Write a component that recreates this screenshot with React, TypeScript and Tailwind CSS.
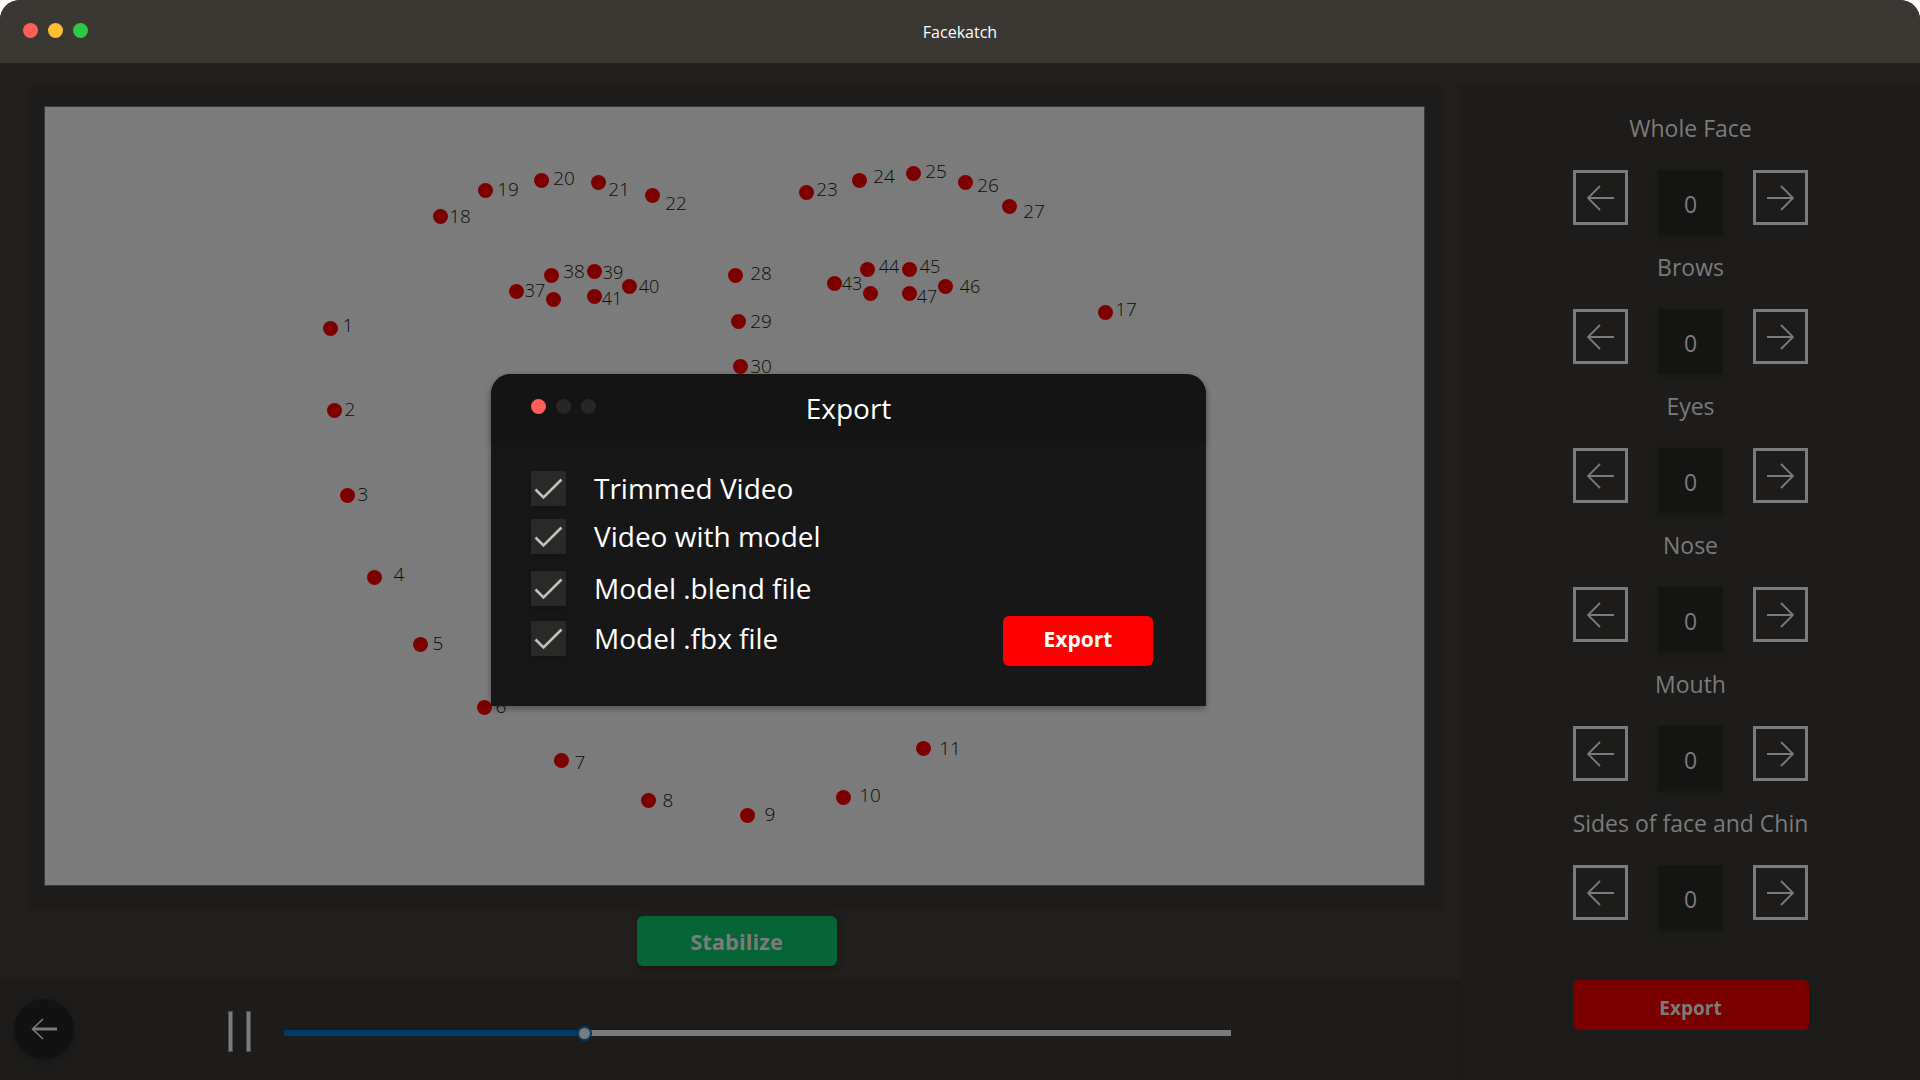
import { useState } from "react";

type Point = { n: string; x: number; y: number; lx?: number; ly?: number; small?: boolean };

const points: Point[] = [
  { n: "1", x: 330, y: 328, lx: 348, ly: 325 },
  { n: "2", x: 334, y: 410, lx: 350, ly: 409 },
  { n: "3", x: 347, y: 495, lx: 363, ly: 494 },
  { n: "4", x: 374, y: 577, lx: 399, ly: 574 },
  { n: "5", x: 420, y: 644, lx: 438, ly: 643 },
  { n: "6", x: 484, y: 707, lx: 501, ly: 706 },
  { n: "7", x: 561, y: 760, lx: 580, ly: 762 },
  { n: "8", x: 648, y: 800, lx: 668, ly: 800 },
  { n: "9", x: 747, y: 815, lx: 770, ly: 814 },
  { n: "10", x: 843, y: 797, lx: 870, ly: 795 },
  { n: "11", x: 923, y: 748, lx: 950, ly: 748 },
  { n: "17", x: 1105, y: 312, lx: 1126, ly: 309 },
  { n: "18", x: 440, y: 216, lx: 460, ly: 216 },
  { n: "19", x: 485, y: 190, lx: 508, ly: 189 },
  { n: "20", x: 541, y: 180, lx: 564, ly: 178 },
  { n: "21", x: 598, y: 182, lx: 619, ly: 189 },
  { n: "22", x: 652, y: 195, lx: 676, ly: 203 },
  { n: "23", x: 806, y: 192, lx: 827, ly: 189 },
  { n: "24", x: 859, y: 180, lx: 884, ly: 176 },
  { n: "25", x: 913, y: 173, lx: 936, ly: 171 },
  { n: "26", x: 965, y: 182, lx: 988, ly: 185 },
  { n: "27", x: 1009, y: 206, lx: 1034, ly: 211 },
  { n: "28", x: 735, y: 275, lx: 761, ly: 273 },
  { n: "29", x: 738, y: 321, lx: 761, ly: 321 },
  { n: "30", x: 740, y: 366, lx: 761, ly: 366 },
  { n: "37", x: 516, y: 291, lx: 535, ly: 290, small: true },
  { n: "38", x: 551, y: 275, lx: 574, ly: 271 },
  { n: "39", x: 594, y: 271, lx: 613, ly: 272, small: true },
  { n: "40", x: 629, y: 286, lx: 649, ly: 286, small: true },
  { n: "41", x: 594, y: 296, lx: 612, ly: 298, small: true },
  { n: "42", x: 553, y: 299 },
  { n: "43", x: 834, y: 283, lx: 852, ly: 283, small: true },
  { n: "44", x: 867, y: 269, lx: 889, ly: 266, small: true },
  { n: "45", x: 909, y: 269, lx: 930, ly: 266, small: true },
  { n: "46", x: 945, y: 286, lx: 970, ly: 286, small: true },
  { n: "47", x: 909, y: 293, lx: 927, ly: 296, small: true },
  { n: "48", x: 870, y: 293 },
];

// Landmark coordinates are in window space; the canvas starts here.
const ORIGIN = { x: 45, y: 107 };

const groups = ["Whole Face", "Brows", "Eyes", "Nose", "Mouth", "Sides of face and Chin"];

const exportsList = [
  { label: "Trimmed Video", gap: "" },
  { label: "Video with model", gap: "mt-[13px]" },
  { label: "Model .blend file", gap: "mt-[17px]" },
  { label: "Model .fbx file", gap: "mt-[15px]" },
];

function Arrow({ flip = false }: { flip?: boolean }) {
  return (
    <svg
      width="27"
      height="26"
      viewBox="0 0 27 26"
      fill="none"
      stroke="currentColor"
      strokeWidth="1.8"
      className={flip ? "rotate-180" : ""}
      aria-hidden="true"
    >
      <path d="M27 13H1M13 1L1 13l12 12" />
    </svg>
  );
}

function Stepper({ label }: { label: string }) {
  const [value, setValue] = useState(0);
  const box =
    "flex size-[55px] items-center justify-center border-[3px] border-[#7b7b7b] text-[#7b7b7b]";
  return (
    <div role="group" aria-label={label} className="flex h-[139px] w-[235px] flex-col">
      <h2 className="flex h-[59px] items-start justify-center whitespace-nowrap text-[23px] leading-[34px]">
        {label}
      </h2>
      <div className="flex items-start justify-between">
        <button type="button" aria-label={`Previous ${label}`} className={box} onClick={() => setValue(value - 1)}>
          <Arrow />
        </button>
        <output className="flex size-[65px] items-center justify-center bg-[#141412] pt-1 text-[23px] shadow-[0_3px_6px_rgba(0,0,0,0.16)]">
          {value}
        </output>
        <button type="button" aria-label={`Next ${label}`} className={box} onClick={() => setValue(value + 1)}>
          <Arrow flip />
        </button>
      </div>
    </div>
  );
}

function FaceCanvas() {
  return (
    <div className="relative min-h-0 flex-1 border border-[#383838] bg-[#7b7b7b]">
      {points.map((p) => (
        <div key={p.n}>
          <span
            className="absolute -mt-[7px] -ml-[7px] size-[15px] rounded-full bg-[#7d0000]"
            style={{ left: p.x - ORIGIN.x, top: p.y - ORIGIN.y }}
          />
          {p.lx !== undefined && p.ly !== undefined && (
            <span
              className={`absolute flex h-6 w-8 -translate-1/2 items-center justify-center font-light text-[#0c0c0c] ${
                p.small ? "text-[18px]" : "text-[19px]"
              }`}
              style={{ left: p.lx - ORIGIN.x, top: p.ly - ORIGIN.y }}
            >
              {p.n}
            </span>
          )}
        </div>
      ))}
    </div>
  );
}

function ExportDialog() {
  return (
    <section
      role="dialog"
      aria-label="Export"
      className="absolute top-[374px] left-[491px] w-[715px] rounded-t-[20px] bg-[#171717] pb-[50px] text-white shadow-[0_3px_6px_rgba(0,0,0,0.3)]"
    >
      <header className="grid h-[68px] grid-cols-[1fr_auto_1fr] items-center rounded-t-[20px] bg-[#141414] px-10 shadow-[0_3px_6px_rgba(0,0,0,0.16)]">
        <div className="flex gap-[10px] pb-1">
          <button type="button" aria-label="Close" className="size-[15px] rounded-full bg-[#ff5f58]" />
          <span className="size-[15px] rounded-full bg-[#272727]" />
          <span className="size-[15px] rounded-full bg-[#272727]" />
        </div>
        <h2 className="text-[28px]">Export</h2>
      </header>
      <form className="flex items-end justify-between pt-[29px] pr-[53px] pl-10" onSubmit={(e) => e.preventDefault()}>
        <div className="flex flex-col">
          {exportsList.map((item) => (
            <label key={item.label} className={`flex h-[35px] items-center gap-7 text-[28px] ${item.gap}`}>
              <span className="grid size-[35px] place-items-center">
                <input
                  type="checkbox"
                  defaultChecked
                  className="peer col-start-1 row-start-1 size-[35px] appearance-none bg-[#2a2927] shadow-[0_3px_6px_rgba(0,0,0,0.16)]"
                />
                <svg
                  viewBox="0 0 35 35"
                  className="pointer-events-none invisible col-start-1 row-start-1 size-[35px] peer-checked:visible"
                  fill="none"
                  stroke="#c0c0bf"
                  strokeWidth="2.6"
                  aria-hidden="true"
                >
                  <path d="M4.500 18.500L12.500 26.500L30.500 8.500" />
                </svg>
              </span>
              <span className="pb-[2px]">{item.label}</span>
            </label>
          ))}
        </div>
        <button
          type="submit"
          className="-mb-[10px] flex h-[50px] w-[150px] items-center justify-center rounded-md bg-[#ff0000] pb-[2px] text-[21px] font-bold"
        >
          Export
        </button>
      </form>
    </section>
  );
}

export default function App() {
  return (
    <div className="bg-white font-['Open_Sans','Noto_Sans',sans-serif]">
      <div className="relative flex min-h-screen flex-col overflow-hidden rounded-t-[20px] bg-[#21201e] text-[#7b7b7b]">
        <header className="grid h-[63px] grid-cols-[1fr_auto_1fr] items-center bg-[#3b3834] px-[23px]">
          <div className="flex gap-[10px] pb-[2px]">
            <button type="button" aria-label="Close window" className="size-[15px] rounded-full bg-[#ff5f58]" />
            <button type="button" aria-label="Minimize window" className="size-[15px] rounded-full bg-[#ffbe2f]" />
            <button type="button" aria-label="Zoom window" className="size-[15px] rounded-full bg-[#2aca42]" />
          </div>
          <h1 className="text-[16px] text-white">Facekatch</h1>
        </header>

        <div className="flex flex-1 pt-[23px]">
          <main className="flex min-w-0 flex-1 flex-col">
            <div className="mr-[19px] ml-[31px] flex flex-1 flex-col bg-[#1d1c1a] pt-5 pr-[17px] pb-[21px] pl-[13px] shadow-[0_3px_6px_rgba(0,0,0,0.12)]">
              <FaceCanvas />
            </div>
            <div className="mr-[19px] ml-[31px] flex h-[72px] justify-center pt-[9px]">
              <button
                type="button"
                className="h-[50px] w-[200px] rounded-md bg-[#066534] text-[22px] font-bold shadow-[0_3px_6px_rgba(30,10,10,0.5)]"
              >
                Stabilize
              </button>
            </div>
            <footer className="flex h-[101px] items-start bg-[#1d1c1a] pt-5 pr-[230px] pl-[14px]">
              <button
                type="button"
                aria-label="Back"
                className="flex size-[60px] items-center justify-center rounded-full bg-[#121212] shadow-[0_3px_6px_rgba(0,0,0,0.16)]"
              >
                <svg width="26" height="22" viewBox="0 0 26 22" fill="none" stroke="currentColor" aria-hidden="true">
                  <path d="M26 11H2" strokeWidth="3" />
                  <path d="M12 1L1.500 11L12 21" strokeWidth="1.6" />
                </svg>
              </button>
              <button type="button" aria-label="Pause" className="mt-3 ml-[154px] flex h-[41px] gap-[13px]">
                <span className="h-full w-[5px] border border-[#4f4e4d] bg-[#7b7b7b]" />
                <span className="h-full w-[5px] border border-[#4f4e4d] bg-[#7b7b7b]" />
              </button>
              <input
                type="range"
                aria-label="Playback position"
                min={0}
                max={1000}
                defaultValue={314}
                className="mt-[26px] ml-[33px] h-[15px] min-w-0 flex-1 appearance-none bg-transparent [&::-webkit-slider-runnable-track]:h-[6px] [&::-webkit-slider-runnable-track]:bg-[linear-gradient(to_right,#003c6b_31.7%,#7b7b7b_31.7%)] [&::-webkit-slider-thumb]:-mt-1 [&::-webkit-slider-thumb]:size-[15px] [&::-webkit-slider-thumb]:appearance-none [&::-webkit-slider-thumb]:rounded-full [&::-webkit-slider-thumb]:border-2 [&::-webkit-slider-thumb]:border-[#003c6b] [&::-webkit-slider-thumb]:bg-[#7b7b7b]"
              />
            </footer>
          </main>

          <aside className="flex w-[459px] flex-col items-center bg-[#1d1c1a] pt-[25px] shadow-[0_3px_6px_rgba(0,0,0,0.12)]">
            {groups.map((g) => (
              <Stepper key={g} label={g} />
            ))}
            <button
              type="button"
              className="mt-[35px] flex h-[50px] w-[236px] items-center justify-center rounded-md bg-[#7b0000] pt-[6px] text-[19px] font-bold"
            >
              Export
            </button>
          </aside>
        </div>

        <ExportDialog />
      </div>
    </div>
  );
}
